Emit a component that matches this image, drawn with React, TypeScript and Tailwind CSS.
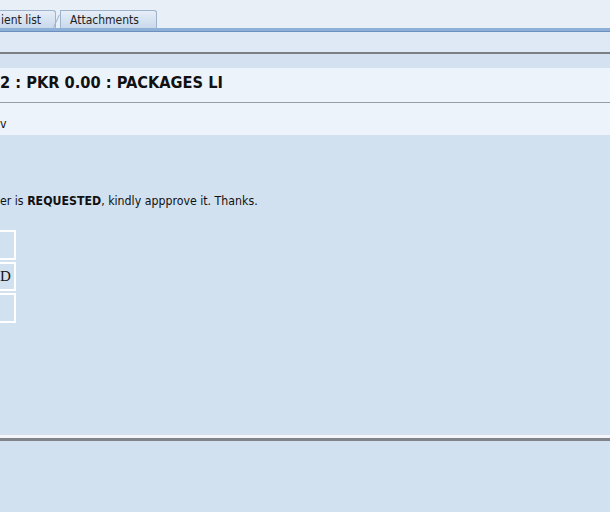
export default function App() {
  return (
    <div className="w-[610px] h-[512px] overflow-hidden bg-[#d2e1f0] font-['DejaVu_Sans_Condensed','DejaVu_Sans',sans-serif] text-[#111]">
      {/* tab strip */}
      <div className="h-[28px] bg-[#e9eff7] flex items-end">
        <div className="h-[18px] w-[56px] border border-l-0 border-b-0 border-[#9fb3cc] rounded-tr-[3px] bg-gradient-to-b from-[#e6eef8] to-[#c9d9ec] text-[12px] leading-[18px] pl-[1px] text-[#222]">
          ient list
        </div>
        <div className="relative ml-[4px] h-[18px] w-[97px] border border-b-0 border-[#9fb3cc] rounded-tr-[3px] bg-gradient-to-b from-[#e6eef8] to-[#c9d9ec] text-[12px] leading-[18px] pl-[9px] text-[#222]">
          <div className="absolute -left-[5px] top-[3px] w-[1px] h-[14px] bg-[#9fb3cc] rotate-[25deg]" />
          Attachments
        </div>
      </div>
      <div className="h-[4px] bg-[#8fb0d6] border-b border-[#6b8fbf]" />
      <div className="h-[20px] bg-[#dfe9f5]" />
      <div className="h-[2px] bg-[#7a7f86]" />
      <div className="h-[14px] bg-[#d3e1f0]" />
      {/* title */}
      <div className="h-[35px] pb-[3px] bg-[#edf3fb] flex items-center border-b border-[#9a9ea4]">
        <span className="text-[16.25px] font-bold text-[#111] leading-none">2 : PKR 0.00 : PACKAGES LI</span>
      </div>
      <div className="h-[32px] pt-[10px] bg-[#edf3fb] flex items-center text-[12.25px]">
        <span>v</span>
      </div>
      {/* body */}
      <div className="h-[300px] bg-[#d2e1f0] flex flex-col">
        <p className="mt-[58px] text-[12.25px] leading-[16px]">
          er is <b>REQUESTED</b>, kindly appprove it. Thanks.
        </p>
        <div className="mt-[21px] flex flex-col gap-[2px]">
          <div className="w-[16px] h-[30px] border-2 border-l-0 border-white" />
          <div className="w-[16px] h-[29px] border-2 border-l-0 border-white flex items-center font-['Liberation_Serif',serif] text-[15px] leading-none">
            <span>D</span>
          </div>
          <div className="w-[16px] h-[30px] border-2 border-l-0 border-white" />
        </div>
      </div>
      <div className="h-[3px] bg-[#f3f5f8]" />
      <div className="h-[3px] bg-[#7f838a]" />
    </div>
  );
}
